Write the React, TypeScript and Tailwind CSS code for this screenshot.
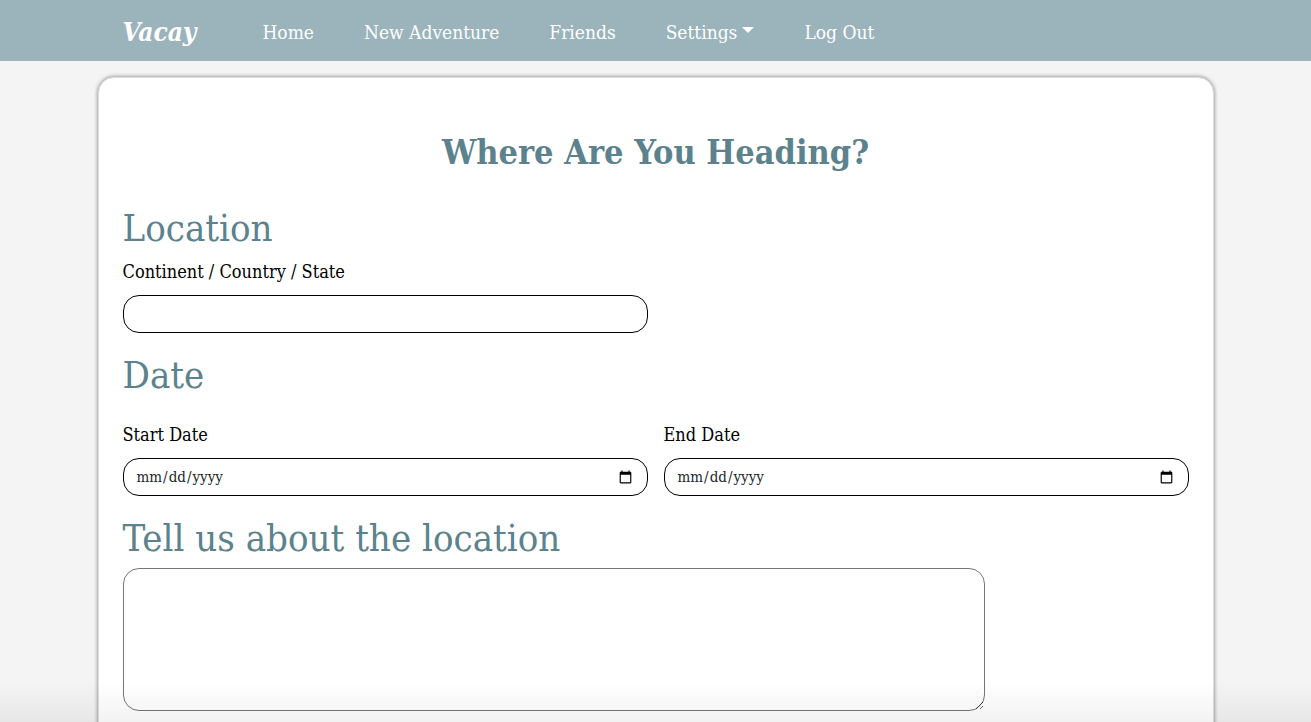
import type { ReactNode } from "react";

const links = ["Home", "New Adventure", "Friends"];

function NavLink({ children }: { children: ReactNode }) {
  return (
    <a href="#" className="text-[19px] leading-6 whitespace-nowrap text-white">
      {children}
    </a>
  );
}

function SectionHeading({ children }: { children: ReactNode }) {
  return <h2 className="text-[38px] leading-[48px] text-[#5c838d]">{children}</h2>;
}

function Field({ id, label, type }: { id: string; label: string; type: string }) {
  return (
    <div className="flex min-w-0 flex-col gap-[11px]">
      <label htmlFor={id} className="text-lg leading-6 text-black">
        {label}
      </label>
      <input
        id={id}
        type={type}
        className="h-[38px] w-full rounded-2xl border border-black bg-white px-3 text-[15px] text-[#212529]"
      />
    </div>
  );
}

export default function App() {
  return (
    <div className="min-h-screen bg-[#f4f4f4] font-['DejaVu_Serif_Condensed','DejaVu_Serif',serif]">
      <header className="bg-[#9bb3bb]">
        <nav className="mx-auto flex h-[61px] max-w-[1140px] items-center px-[37px] pt-[2px]">
          <a href="#" className="mr-[66px] text-[26px] leading-8 font-bold text-white italic">
            Vacay
          </a>
          <div className="flex items-center gap-[50px]">
            {links.map((link) => (
              <NavLink key={link}>{link}</NavLink>
            ))}
            <button
              type="button"
              className="flex items-center gap-[5px] text-[19px] leading-6 whitespace-nowrap text-white"
            >
              Settings
              <svg width="12" height="6" viewBox="0 0 12 6" fill="currentColor" className="mb-1" aria-hidden="true">
                <path d="M0 0H12L6 6Z" />
              </svg>
            </button>
            <NavLink>Log Out</NavLink>
          </div>
        </nav>
      </header>

      <main className="mx-auto max-w-[1140px] px-3 py-4">
        <form className="rounded-2xl border border-[#dedede] bg-white px-6 pt-[50px] pb-12 shadow-[0_0_4px_rgba(0,0,0,0.5)]">
          <h1 className="text-center text-[34px] leading-[48px] font-bold text-[#5c838d]">
            Where Are You Heading?
          </h1>

          <section className="mt-7">
            <SectionHeading>Location</SectionHeading>
            <div className="mt-2 grid grid-cols-2 gap-4">
              <Field id="place" label="Continent / Country / State" type="text" />
            </div>
          </section>

          <section className="mt-[18px]">
            <SectionHeading>Date</SectionHeading>
            <div className="mt-6 grid grid-cols-2 gap-4">
              <Field id="start-date" label="Start Date" type="date" />
              <Field id="end-date" label="End Date" type="date" />
            </div>
          </section>

          <section className="mt-[18px]">
            <SectionHeading>
              <label htmlFor="about">Tell us about the location</label>
            </SectionHeading>
            <textarea
              id="about"
              className="mt-[6px] block h-[143px] w-[862px] max-w-full resize rounded-2xl border border-[#767676] bg-white px-3 py-2 text-[15px]"
            />
          </section>
        </form>
      </main>

      <div className="pointer-events-none fixed inset-x-0 bottom-0 h-10 bg-linear-to-t from-black/5 to-transparent" />
    </div>
  );
}
